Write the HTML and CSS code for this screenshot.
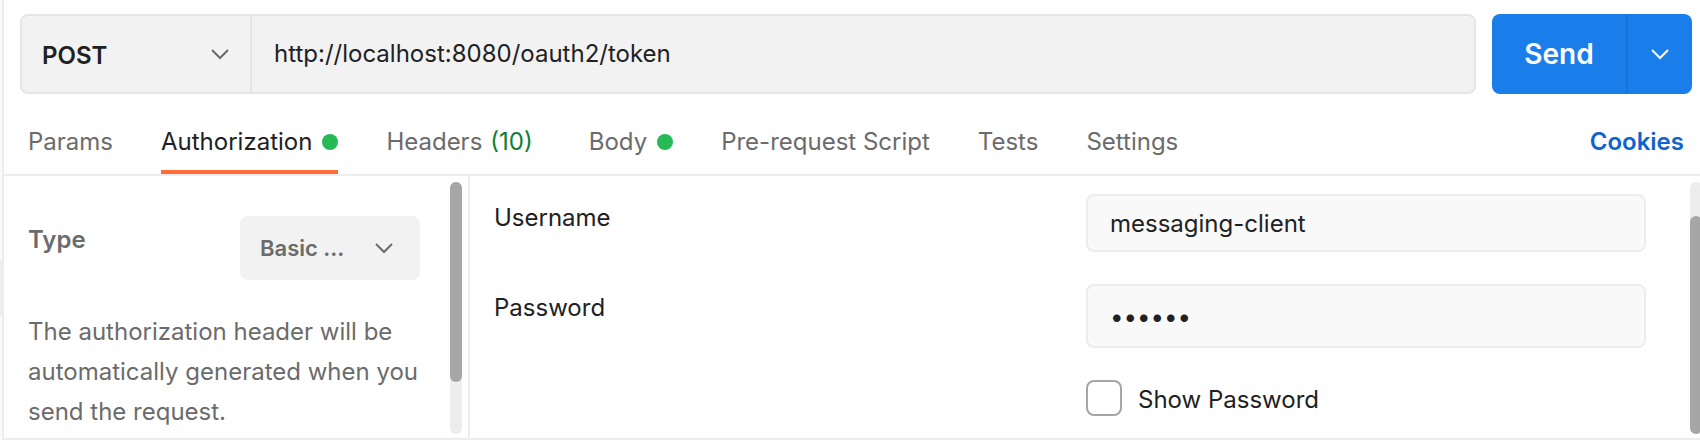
FILE: index.html
```html
<!DOCTYPE html>
<html lang="en">
<head>
<meta charset="utf-8">
<title>Request</title>
<link rel="stylesheet" href="styles.css">
</head>
<body>
<div class="app">
  <div class="gutter"><div class="gutter-handle"></div></div>
  <main class="request">
    <form class="request-bar">
      <div class="url-group">
        <div class="select-wrap method">
          <select class="method-select" aria-label="Method"><option>POST</option></select>
          <svg class="chevron" viewBox="0 0 20 12" aria-hidden="true"><path d="M2 2l8 8 8-8"/></svg>
        </div>
        <input class="url-input" type="text" aria-label="Request URL" value="http://localhost:8080/oauth2/token">
      </div>
      <div class="send-group">
        <button class="send" type="button">Send</button>
        <button class="send-more" type="button" aria-label="More send options"><svg class="chevron chevron-light" viewBox="0 0 20 12" aria-hidden="true"><path d="M2 2l8 8 8-8"/></svg></button>
      </div>
    </form>
    <nav class="tabs">
      <button class="tab" type="button">Params</button>
      <button class="tab tab-active" type="button">Authorization<span class="dot"></span></button>
      <button class="tab tab-counted" type="button">Headers <span class="count">(10)</span></button>
      <button class="tab" type="button">Body<span class="dot"></span></button>
      <button class="tab" type="button">Pre-request Script</button>
      <button class="tab" type="button">Tests</button>
      <button class="tab" type="button">Settings</button>
      <a class="cookies" href="#">Cookies</a>
    </nav>
    <div class="auth">
      <section class="auth-type">
        <div class="auth-side">
          <div class="type-row">
            <label class="type-label" for="type">Type</label>
            <div class="select-wrap type">
              <select class="type-select" id="type"><option>Basic …</option></select>
              <svg class="chevron" viewBox="0 0 20 12" aria-hidden="true"><path d="M2 2l8 8 8-8"/></svg>
            </div>
          </div>
          <p class="description">The authorization header will be automatically generated when you send the request.</p>
        </div>
        <div class="scrollbar"><div class="thumb thumb-start"></div></div>
      </section>
      <section class="auth-form">
        <div class="fields">
          <label class="field-label" for="username">Username</label>
          <input class="field" id="username" type="text" value="messaging-client">
          <label class="field-label" for="password">Password</label>
          <input class="field field-password" id="password" type="password" value="secret">
          <div class="show">
            <input class="check" id="show" type="checkbox">
            <label class="show-label" for="show">Show Password</label>
          </div>
        </div>
        <div class="scrollbar"><div class="thumb thumb-end"></div></div>
      </section>
    </div>
  </main>
</div>
</body>
</html>
```
FILE: styles.css
```css
* { box-sizing: border-box; }

body {
  margin: 0;
  background: #fff;
  color: #212121;
  font: 24px/32px Inter, "Liberation Sans", sans-serif;
}

button, input, select {
  margin: 0;
  border: 0;
  padding: 0;
  background: none;
  color: inherit;
  font: inherit;
  appearance: none;
  outline: none;
}

.app {
  display: flex;
  min-height: 100vh;
  overflow: hidden;
}

.gutter {
  width: 4px;
  padding-top: 260px;
  background: #fafafa;
  border-right: 2px solid #ededed;
}

.gutter-handle { height: 56px; background: #ededed; }

.request {
  flex: 1;
  min-width: 0;
  display: flex;
  flex-direction: column;
  border-bottom: 2px solid #ededed;
}

.request-bar {
  display: flex;
  gap: 16px;
  padding: 14px 8px 0 16px;
}

.url-group {
  flex: 1;
  display: flex;
  height: 80px;
  border: 2px solid #e6e6e6;
  border-radius: 8px;
  background: #f2f2f2;
  overflow: hidden;
}

.select-wrap { display: grid; align-items: center; }
.select-wrap > * { grid-area: 1 / 1; }

.chevron {
  width: 20px;
  height: 12px;
  fill: none;
  stroke: #6b6b6b;
  stroke-width: 2;
  pointer-events: none;
}
.chevron-light { display: block; margin: 0 auto; stroke: #fff; }
.select-wrap .chevron { justify-self: end; margin-right: 20px; }

.method { width: 230px; border-right: 2px solid #e6e6e6; }
.method-select {
  height: 100%;
  padding: 4px 20px 0;
  font-weight: 600;
}

.url-input { flex: 1; min-width: 0; padding: 0 22px; }

.send-group {
  display: flex;
  width: 200px;
  border-radius: 8px;
  background: #1a7eea;
  color: #fff;
  overflow: hidden;
}
.send { flex: 1; font-size: 28px; font-weight: 600; }
.send-more { width: 66px; border-left: 2px solid #1873d6; }

.tabs {
  display: flex;
  gap: 48px;
  height: 82px;
  padding: 0 16px 0 24px;
  border-bottom: 2px solid #ededed;
  white-space: nowrap;
}

.tab {
  display: flex;
  align-items: center;
  gap: 10px;
  padding-top: 20px;
  border-bottom: 4px solid transparent;
  color: #6b6b6b;
}
.tab-active { border-color: #ff6c37; color: #212121; }
.tab-counted { gap: 8px; padding-right: 8px; }
.dot { width: 16px; height: 16px; border-radius: 50%; background: #26b956; }
.count { color: #0e7f35; }

.cookies {
  margin-left: auto;
  padding-top: 32px;
  color: #1063cb;
  font-weight: 600;
  text-decoration: none;
}

.auth { flex: 1; display: flex; }

.auth-type {
  display: flex;
  gap: 30px;
  width: 466px;
  padding: 0 6px 0 24px;
  border-right: 2px solid #ededed;
  color: #6b6b6b;
}
.auth-side { flex: 1; padding-top: 40px; }

.type-row { display: flex; justify-content: space-between; }
.type-label { font-weight: 600; line-height: 48px; }
.type {
  width: 180px;
  height: 64px;
  border-radius: 8px;
  background: #f2f2f2;
}
.type .chevron { margin-right: 26px; }
.type-select {
  height: 100%;
  padding: 0 20px;
  font-size: 22px;
  font-weight: 600;
}
.description { margin: 32px 0 0; line-height: 40px; }

.scrollbar {
  flex: none;
  width: 12px;
  margin: 6px 0 4px;
  border-radius: 6px;
  background: #ededed;
  display: flex;
  flex-direction: column;
}
.thumb { border-radius: 6px; background: #a6a6a6; }
.thumb-start { height: 200px; }
.thumb-end { flex: 1; margin-top: 34px; }

.auth-form {
  flex: 1;
  display: flex;
  gap: 44px;
  margin-right: -2px;
  padding: 18px 0 0 24px;
}
.auth-form .scrollbar { margin-top: -12px; }

.fields {
  flex: 1;
  display: grid;
  grid-template-columns: 592fr 560fr;
  align-content: start;
  row-gap: 32px;
}
.field-label { line-height: 48px; }
.field {
  width: 100%;
  height: 58px;
  padding: 0 22px;
  border: 2px solid #ededed;
  border-radius: 8px;
  background: #f9f9f9;
}
.field-password { height: 64px; }

.show {
  grid-column: 2;
  display: flex;
  gap: 16px;
}
.show-label { line-height: 40px; }
.check {
  width: 36px;
  height: 36px;
  border: 2px solid #a6a6a6;
  border-radius: 8px;
  background: #fff;
}
```
